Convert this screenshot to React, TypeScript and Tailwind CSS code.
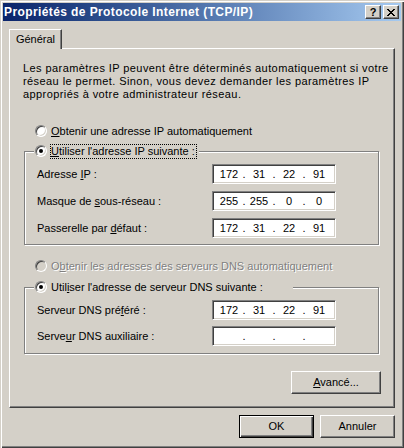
import { Fragment, type ReactNode } from "react";

const raised =
  "border border-t-white border-l-white border-r-[#404040] border-b-[#404040] shadow-[inset_-1px_-1px_#808080]";
const sunken =
  "border border-t-[#808080] border-l-[#808080] border-r-white border-b-white shadow-[inset_1px_1px_#404040,inset_-1px_-1px_#d4d0c8]";

function Radio({ checked, disabled }: { checked?: boolean; disabled?: boolean }) {
  return (
    <span
      className={`flex h-[12px] w-[12px] shrink-0 items-center justify-center rounded-full border border-t-[#808080] border-l-[#808080] border-r-white border-b-white shadow-[inset_1px_1px_#404040,inset_-1px_-1px_#d4d0c8] ${
        disabled ? "bg-[#d4d0c8]" : "bg-white"
      }`}
    >
      {checked && <span className="h-[4px] w-[4px] rounded-full bg-black" />}
    </span>
  );
}

function IpField({ parts = ["", "", "", ""] }: { parts?: string[] }) {
  return (
    <div className={`flex h-[20px] w-[124px] items-center bg-white pl-[4px] ${sunken}`}>
      {parts.map((p, i) => (
        <Fragment key={i}>
          <span className="w-[24px] text-center">{p}</span>
          {i < 3 && <span className="w-[6px] text-center">.</span>}
        </Fragment>
      ))}
    </div>
  );
}

function Row({ label, parts }: { label: ReactNode; parts?: string[] }) {
  return (
    <div className="flex h-[20px] items-center">
      <span className="w-[175px]">{label}</span>
      <IpField parts={parts} />
    </div>
  );
}

function GroupBox({
  legend,
  focused,
  children,
  className = "",
  legendClass = "",
}: {
  legend: ReactNode;
  focused?: boolean;
  children: ReactNode;
  className?: string;
  legendClass?: string;
}) {
  return (
    <div
      className={`relative ml-[14px] flex w-[355px] flex-col border border-[#808080] pl-[12px] pt-[12px] shadow-[1px_1px_#fff,inset_1px_1px_#fff] ${className}`}
    >
      {/* legend sits over the etched top border */}
      <div className={`absolute left-[9px] top-[-9px] flex h-[16px] items-center gap-[3px] bg-[#d4d0c8] pl-px pr-[2px] ${legendClass}`}>
        <Radio checked />
        <span
          className={`flex h-[15px] items-center pr-px ${
            focused ? "border border-dotted border-black" : "border border-transparent"
          }`}
        >
          {legend}
        </span>
      </div>
      {children}
    </div>
  );
}

function CloseGlyph() {
  const cells = [
    "xx....xx",
    ".xx..xx.",
    "..xxxx..",
    "...xx...",
    "..xxxx..",
    ".xx..xx.",
    "xx....xx",
  ];
  return (
    <svg width="8" height="7" viewBox="0 0 8 7" shapeRendering="crispEdges" aria-hidden="true">
      {cells.map((row, y) =>
        row.split("").map((c, x) =>
          c === "x" ? <rect key={`${x}-${y}`} x={x} y={y} width="1" height="1" fill="#000" /> : null
        )
      )}
    </svg>
  );
}

export default function App() {
  return (
    <div className="flex h-[448px] w-[404px] flex-col bg-[#d4d0c8] p-[3px] font-['Liberation_Sans',Arial,sans-serif] text-[11px] leading-[13px] text-black shadow-[inset_1px_1px_#d4d0c8,inset_2px_2px_#fff,inset_-1px_-1px_#404040,inset_-2px_-2px_#808080]">
      {/* Title bar */}
      <div className="flex h-[18px] items-center bg-linear-to-r from-[#0a246a] to-[#a6caf0] pl-[1px] pr-[2px]">
        <span className="flex-1 text-[12px] font-bold tracking-[0.4px] text-white">
          Propriétés de Protocole Internet (TCP/IP)
        </span>
        <button className={`flex h-[14px] w-[16px] items-center justify-center bg-[#d4d0c8] text-[11px] font-bold leading-none ${raised}`}>
          ?
        </button>
        <button className={`ml-[2px] flex h-[14px] w-[16px] items-center justify-center bg-[#d4d0c8] ${raised}`}>
          <CloseGlyph />
        </button>
      </div>

      {/* Tabs */}
      <div className="mt-[8px] flex px-[6px]">
        <div className="relative z-10 -mb-px flex h-[20px] w-[53px] items-center justify-center border-l border-t border-r border-l-white border-t-white border-r-[#404040] bg-[#d4d0c8] shadow-[inset_-1px_0_#808080]">
          Général
        </div>
      </div>

      {/* Tab panel */}
      <div className={`mx-[6px] flex h-[360px] flex-col bg-[#d4d0c8] ${raised}`}>
        <p className="ml-[13px] mt-[13px] tracking-[0.42px]">
          Les paramètres IP peuvent être déterminés automatiquement si votre
          <br />
          réseau le permet. Sinon, vous devez demander les paramètres IP
          <br />
          appropriés à votre administrateur réseau.
        </p>

        <div className="ml-[25px] mt-[22px] flex h-[16px] items-center gap-[4px]">
          <Radio />
          <span>
            <u>O</u>btenir une adresse IP automatiquement
          </span>
        </div>

        <GroupBox
          focused
          className="mt-[12px] gap-[7px] pb-[6px]"
          legend={
            <>
              <u>U</u>tiliser l'adresse IP suivante :
            </>
          }
        >
          <Row
            label={
              <>
                Adresse <u>I</u>P :
              </>
            }
            parts={["172", "31", "22", "91"]}
          />
          <Row
            label={
              <>
                Masque de <u>s</u>ous-réseau :
              </>
            }
            parts={["255", "255", "0", "0"]}
          />
          <Row
            label={
              <>
                Passerelle par <u>d</u>éfaut :
              </>
            }
            parts={["172", "31", "22", "91"]}
          />
        </GroupBox>

        <div className="ml-[25px] mt-[13px] flex h-[16px] items-center gap-[4px] text-[#808080] [text-shadow:1px_1px_0_#fff]">
          <Radio disabled />
          <span>
            O<u>b</u>tenir les adresses des serveurs DNS automatiquement
          </span>
        </div>

        <GroupBox
          className="mt-[13px] gap-[6px] pb-[7px]"
          legendClass="w-[259px]"
          legend={
            <>
              Util<u>i</u>ser l'adresse de serveur DNS suivante :
            </>
          }
        >
          <Row
            label={
              <>
                Serveur DNS pré<u>f</u>éré :
              </>
            }
            parts={["172", "31", "22", "91"]}
          />
          <Row
            label={
              <>
                Serve<u>u</u>r DNS auxiliaire :
              </>
            }
          />
        </GroupBox>

        <button className={`mr-[13px] mt-[17px] h-[23px] w-[90px] self-end bg-[#d4d0c8] ${raised}`}>
          <u>A</u>vancé...
        </button>
      </div>

      {/* Dialog buttons */}
      <div className="mt-[7px] flex justify-end gap-[6px] px-[6px]">
        <button className="h-[23px] w-[75px] border border-black bg-[#d4d0c8] shadow-[inset_1px_1px_#fff,inset_-1px_-1px_#404040,inset_-2px_-2px_#808080]">
          OK
        </button>
        <button className={`h-[23px] w-[75px] bg-[#d4d0c8] ${raised}`}>Annuler</button>
      </div>
    </div>
  );
}
